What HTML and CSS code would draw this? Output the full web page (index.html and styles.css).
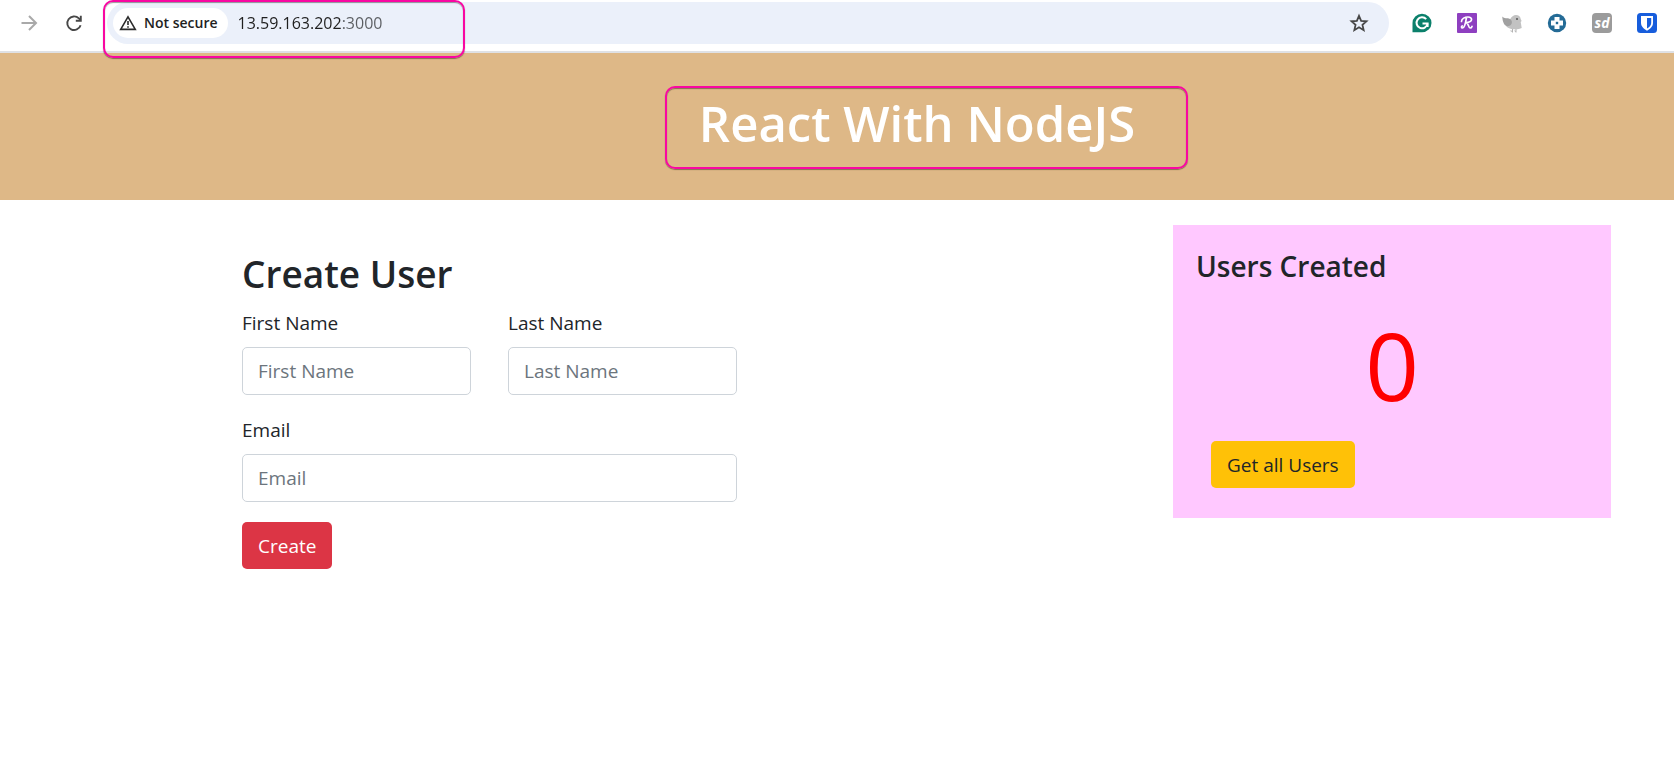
FILE: index.html
```html
<!DOCTYPE html>
<html lang="en">
<head>
<meta charset="utf-8">
<meta name="viewport" content="width=device-width, initial-scale=1">
<title>React With NodeJS</title>
<link rel="stylesheet" href="styles.css">
</head>
<body>
<div class="toolbar">
  <button class="tool-button" type="button" aria-label="Forward">
    <svg width="20" height="20" viewBox="0 0 20 20" fill="none" stroke="#a9a9a9" stroke-width="2"><path d="M2.500 10H16.500M10 3l7 7-7 7"/></svg>
  </button>
  <button class="tool-button" type="button" aria-label="Reload">
    <svg width="20" height="20" viewBox="0 0 20 20" fill="none" stroke="#474747" stroke-width="1.900"><path d="M16.600 12.200A6.800 6.800 0 1 1 14.900 5.400L16.500 7"/><path d="M16.800 2.800V7.800h-5"/></svg>
  </button>
  <div class="omnibox">
    <button class="chip" type="button">
      <svg width="18" height="18" viewBox="0 0 18 18" fill="none" stroke="#2b2b2b" stroke-width="1.600"><path d="M9 2.800L16.300 15.400H1.700Z"/><path d="M9 7v4M9 12.200v1.600"/></svg>
      <span>Not secure</span>
    </button>
    <input class="address" type="text" value="13.59.163.202:3000" aria-label="Address">
    <button class="star" type="button" aria-label="Bookmark this page">
      <svg width="20" height="20" viewBox="0 0 20 20" fill="none" stroke="#474747" stroke-width="1.800"><path d="M10 2.800l2.150 5 5.350.500-4.050 3.550 1.200 5.300L10 14.300l-4.650 2.850 1.200-5.300L2.500 8.300l5.350-.500z"/></svg>
    </button>
  </div>
  <div class="extensions">
    <button class="extension" type="button" aria-label="Writing assistant">
      <svg width="20" height="20" viewBox="0 0 20 20"><path d="M.500 19.300V10A9.500 9.300 0 1 1 10 19.300Z" fill="#0b806b"/><path d="M14.200 6.200A5.500 5.500 0 1 0 15.500 10.700" fill="none" stroke="#fff" stroke-width="2"/><path d="M10.500 10.500h5.200v3.500" fill="none" stroke="#fff" stroke-width="1.800"/></svg>
    </button>
    <button class="extension" type="button" aria-label="Deals">
      <svg width="20" height="20" viewBox="0 0 20 20"><rect width="20" height="20" rx="1" fill="#8e3fc0"/><path d="M9.500 4.500C8.800 9 7.500 15 5.500 15c-1.300 0-1.300-1.500-.300-2M4.500 8.500C4.500 5.500 8 4 11 4c5 0 5 5.200-1.800 5.700C11.500 10 11.500 15 13 15c1 0 1.700-.700 2-1.600" fill="none" stroke="#fff" stroke-width="1.700" stroke-linecap="round"/></svg>
    </button>
    <button class="extension" type="button" aria-label="Bird">
      <svg width="20" height="20" viewBox="0 0 20 20"><path d="M8 6.500C9.500 3.500 11.500 2 14 2c2.500 0 4.500 1.500 4.700 4l.900 2-.900 1 1 6c-2 1-4.500 1.500-7.700 1.300-4-.200-6.500-1.300-8-3.300z" fill="#c2c2c2"/><path d="M.300 3.500C2.500 6 5 4.500 8 6c3 1.800 2.500 6-1 7-4 1-6.500-3-6.700-9.500z" fill="#a0a0a0"/><path d="M10.500 16v3.500M14 16v3.500M8.500 17.800l2 .700M12.500 17.800l1.500.700" stroke="#b3b3b3" fill="none"/><circle cx="15" cy="6" r="1" fill="#555"/></svg>
    </button>
    <button class="extension" type="button" aria-label="Health">
      <svg width="20" height="20" viewBox="0 0 20 20"><circle cx="10" cy="10" r="9.200" fill="#246b96"/><path d="M7.500 4h5v3.500H16v5h-3.500V16h-5v-3.500H4v-5h3.500z" fill="#fff"/><path d="M8.800 8.800h2.400v2.400H8.800z" fill="#246b96"/></svg>
    </button>
    <button class="extension extension-sd" type="button">sd</button>
    <button class="extension" type="button" aria-label="Password manager">
      <svg width="20" height="20" viewBox="0 0 20 20"><rect width="20" height="20" rx="3.500" fill="#175ddc"/><path d="M4 3h12v7c0 3.500-3 6-6 7.700C7 16 4 13.500 4 10z" fill="#fff"/><path d="M10 5h4.200v5c0 2.400-2 4.200-4.200 5.500z" fill="#175ddc"/></svg>
    </button>
  </div>
  <div class="mark mark-address"></div>
</div>

<header class="banner">
  <div class="banner-title">
    <h1>React With NodeJS</h1>
    <div class="mark mark-title"></div>
  </div>
</header>

<main class="content">
  <form class="user-form">
    <h2>Create User</h2>
    <div class="fields">
      <div class="field">
        <label for="first">First Name</label>
        <input id="first" type="text" placeholder="First Name">
      </div>
      <div class="field">
        <label for="last">Last Name</label>
        <input id="last" type="text" placeholder="Last Name">
      </div>
      <div class="field field-wide">
        <label for="email">Email</label>
        <input id="email" type="email" placeholder="Email">
      </div>
    </div>
    <button class="btn btn-create" type="button">Create</button>
  </form>
  <section class="card">
    <h3>Users Created</h3>
    <div class="count">0</div>
    <button class="btn btn-users" type="button">Get all Users</button>
  </section>
</main>
</body>
</html>
```
FILE: styles.css
```css
* {
  box-sizing: border-box;
}

body {
  margin: 0;
  background: #fff;
  color: #212529;
  font-family: "Open Sans", "Noto Sans", sans-serif;
  font-size: 19px;
  line-height: 30px;
}

h1, h2, h3 {
  margin: 0;
  font-weight: 600;
}

button, input {
  font: inherit;
}

button {
  border: 0;
  padding: 0;
  background: none;
  color: inherit;
}

svg {
  display: block;
}

/* Browser toolbar */
.toolbar {
  position: relative;
  display: flex;
  align-items: center;
  padding: 2px 17px 7px 19px;
  border-bottom: 2px solid #dfe1e5;
}

.tool-button {
  margin-right: 25px;
}

.tool-button + .omnibox {
  margin-left: -2px;
}

.omnibox {
  display: flex;
  flex: 1;
  align-items: center;
  height: 42px;
  padding: 0 20px 0 6px;
  border-radius: 21px;
  background: #ebf0fa;
}

.chip {
  display: flex;
  align-items: center;
  gap: 7px;
  height: 30px;
  padding: 0 10px 0 6px;
  border-radius: 15px;
  background: #fff;
  color: #1f1f1f;
  font-size: 14px;
  font-weight: 600;
  white-space: nowrap;
}

.address {
  flex: 1;
  min-width: 0;
  margin: 0 10px;
  padding: 0;
  border: 0;
  outline: 0;
  background: linear-gradient(to right, #1f1f1f 105px, #5a5d61 105px) text;
  color: transparent;
  font-size: 16px;
}

.extensions {
  display: flex;
  gap: 25px;
  margin-left: 23px;
}

.extension {
  width: 20px;
  height: 20px;
}

.extension-sd {
  border-radius: 4px;
  background: #9b9b9b;
  color: #fff;
  font-size: 14px;
  font-style: italic;
  font-weight: 700;
  line-height: 18px;
}

/* Highlight outlines */
.mark {
  position: absolute;
  border: 2px solid #f907a2;
  border-radius: 10px;
  box-shadow: 0 1px 1px #0006, inset 0 1px 1px #0006;
  pointer-events: none;
}

.mark-address {
  top: 0;
  left: 103px;
  width: 362px;
  height: 58px;
}

.mark-title {
  inset: 0 -53px 0 -34px;
}

/* Page header */
.banner {
  display: flex;
  justify-content: center;
  padding: 33px 0 31px 160px;
  background: #deb887;
}

.banner-title {
  position: relative;
}

.banner h1 {
  padding: 0 0 8px;
  color: #fff;
  font-size: 49px;
  line-height: 75px;
}

/* Form and summary */
.content {
  display: flex;
  justify-content: space-between;
  align-items: flex-start;
  gap: 40px;
  padding: 25px 63px 25px 242px;
}

.user-form {
  flex: 0 1 495px;
  padding-top: 25px;
}

.user-form h2 {
  margin-bottom: 10px;
  font-size: 37px;
  line-height: 48px;
}

.fields {
  display: grid;
  grid-template-columns: 1fr 1fr;
  gap: 20px 37px;
  margin-bottom: 20px;
}

.field {
  display: flex;
  flex-direction: column;
  gap: 9px;
  min-width: 0;
}

.field-wide {
  grid-column: 1 / -1;
}

.field input {
  width: 100%;
  height: 48px;
  padding: 0 15px;
  border: 1px solid #ced4da;
  border-radius: 5px;
  background: #fff;
  color: #495057;
}

.field input::placeholder {
  color: #6c757d;
  opacity: 1;
}

.btn {
  height: 47px;
  padding: 0 16px;
  border-radius: 5px;
}

.btn-create {
  background: #dc3545;
  color: #fff;
}

.btn-users {
  margin-left: 15px;
  background: #ffc107;
}

.card {
  flex: 0 1 438px;
  padding: 23px 23px 30px;
  background: #ffc8ff;
}

.card h3 {
  font-size: 28px;
  line-height: 36px;
}

.count {
  margin: 9px 0 4px;
  color: #f00;
  font-size: 94px;
  line-height: 144px;
  text-align: center;
}
```
